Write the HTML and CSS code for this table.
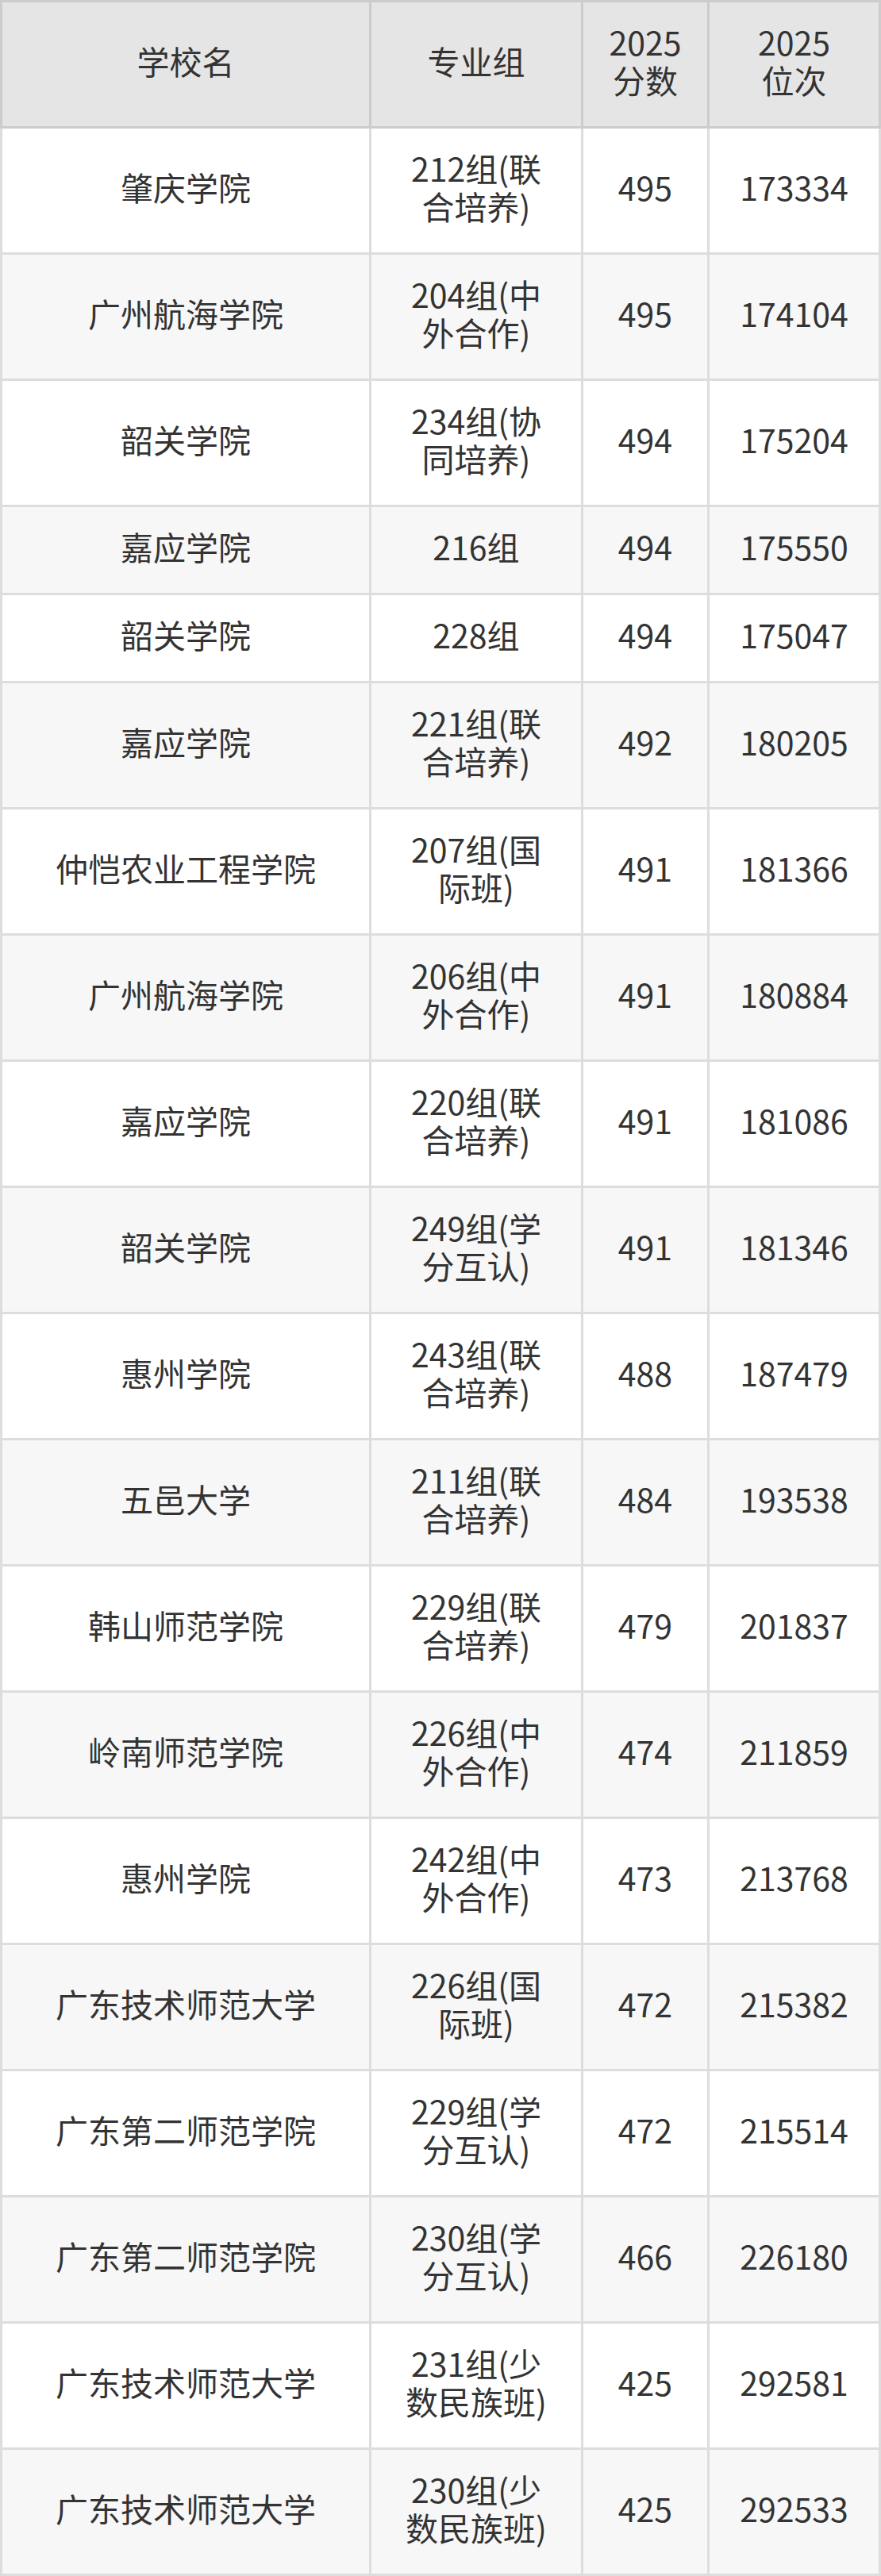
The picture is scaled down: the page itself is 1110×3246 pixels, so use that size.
FILE: index.html
```html
<!DOCTYPE html>
<html lang="zh-CN">
<head>
<meta charset="utf-8">
<title>2025 分数位次</title>
<link rel="stylesheet" href="styles.css">
</head>
<body>
<table class="score-table">
  <colgroup>
    <col class="c-school">
    <col class="c-group">
    <col class="c-score">
    <col class="c-rank">
  </colgroup>
  <thead>
    <tr><th>学校名</th><th>专业组</th><th>2025<br>分数</th><th>2025<br>位次</th></tr>
  </thead>
  <tbody>
    <tr><td>肇庆学院</td><td>212组(联合培养)</td><td>495</td><td>173334</td></tr>
    <tr><td>广州航海学院</td><td>204组(中外合作)</td><td>495</td><td>174104</td></tr>
    <tr><td>韶关学院</td><td>234组(协同培养)</td><td>494</td><td>175204</td></tr>
    <tr><td>嘉应学院</td><td>216组</td><td>494</td><td>175550</td></tr>
    <tr><td>韶关学院</td><td>228组</td><td>494</td><td>175047</td></tr>
    <tr><td>嘉应学院</td><td>221组(联合培养)</td><td>492</td><td>180205</td></tr>
    <tr><td>仲恺农业工程学院</td><td>207组(国际班)</td><td>491</td><td>181366</td></tr>
    <tr><td>广州航海学院</td><td>206组(中外合作)</td><td>491</td><td>180884</td></tr>
    <tr><td>嘉应学院</td><td>220组(联合培养)</td><td>491</td><td>181086</td></tr>
    <tr><td>韶关学院</td><td>249组(学分互认)</td><td>491</td><td>181346</td></tr>
    <tr><td>惠州学院</td><td>243组(联合培养)</td><td>488</td><td>187479</td></tr>
    <tr><td>五邑大学</td><td>211组(联合培养)</td><td>484</td><td>193538</td></tr>
    <tr><td>韩山师范学院</td><td>229组(联合培养)</td><td>479</td><td>201837</td></tr>
    <tr><td>岭南师范学院</td><td>226组(中外合作)</td><td>474</td><td>211859</td></tr>
    <tr><td>惠州学院</td><td>242组(中外合作)</td><td>473</td><td>213768</td></tr>
    <tr><td>广东技术师范大学</td><td>226组(国际班)</td><td>472</td><td>215382</td></tr>
    <tr><td>广东第二师范学院</td><td>229组(学分互认)</td><td>472</td><td>215514</td></tr>
    <tr><td>广东第二师范学院</td><td>230组(学分互认)</td><td>466</td><td>226180</td></tr>
    <tr><td>广东技术师范大学</td><td>231组(少数民族班)</td><td>425</td><td>292581</td></tr>
    <tr><td>广东技术师范大学</td><td>230组(少数民族班)</td><td>425</td><td>292533</td></tr>
  </tbody>
</table>
</body>
</html>
```
FILE: styles.css
```css
html, body {
  margin: 0;
  padding: 0;
  background: #ffffff;
}

.score-table {
  width: 1110px;
  table-layout: fixed;
  border-collapse: separate;
  border-spacing: 0;
  font-family: "Noto Sans CJK SC", "Noto Sans", sans-serif;
  font-size: 41px;
  line-height: 48px;
  color: #333333;
}

.c-school { width: 468px; }
.c-group { width: 267px; }
.c-score { width: 159px; }
.c-rank { width: 216px; }

.score-table th,
.score-table td {
  padding: 25px 35px 35px;
  text-align: center;
  vertical-align: middle;
  font-weight: 400;
}

.score-table th {
  background: #e5e5e5;
  border-top: 3px solid #cccccc;
  border-right: 3px solid #cccccc;
  border-bottom: 3px solid #cccccc;
}

.score-table th:first-child {
  border-left: 3px solid #cccccc;
}

.score-table td {
  border-right: 3px solid #dddddd;
  border-bottom: 3px solid #dddddd;
}

.score-table td:first-child {
  border-left: 3px solid #dddddd;
}

.score-table th:nth-child(3),
.score-table td:nth-child(3),
.score-table th:nth-child(4),
.score-table td:nth-child(4) {
  padding-left: 14px;
  padding-right: 14px;
}

.score-table tbody tr:nth-child(odd) td {
  background: #ffffff;
}

.score-table tbody tr:nth-child(even) td {
  background: #f7f7f7;
}
```
